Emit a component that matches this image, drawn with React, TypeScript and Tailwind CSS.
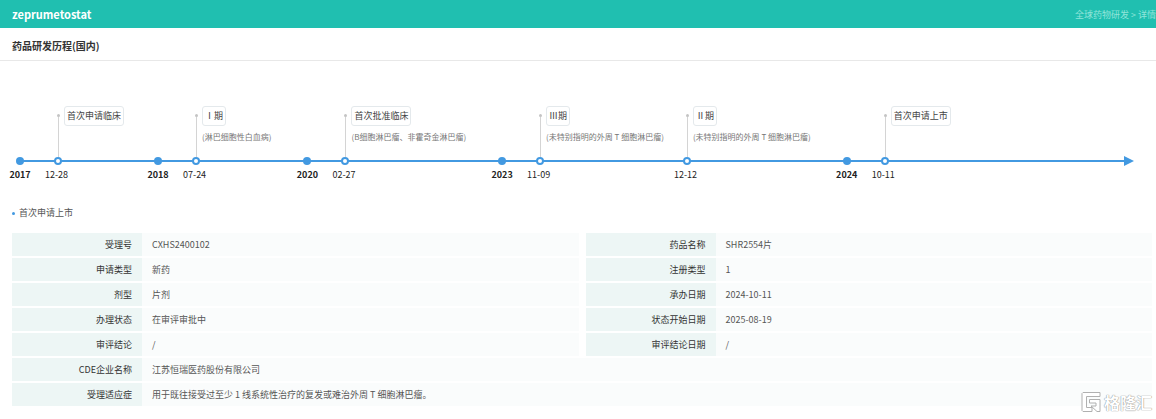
import React from "react"

interface YearItem {
  kind: "year"
  label: string
}

interface EventItem {
  kind: "event"
  date: string
  title: string
  note?: string
}

type TimelineItem = YearItem | EventItem

interface Field {
  label: string
  value: string
}

const timeline: TimelineItem[] = [
  { kind: "year", label: "2017" },
  { kind: "event", date: "12-28", title: "首次申请临床" },
  { kind: "year", label: "2018" },
  { kind: "event", date: "07-24", title: "Ⅰ期", note: "(淋巴细胞性白血病)" },
  { kind: "year", label: "2020" },
  { kind: "event", date: "02-27", title: "首次批准临床", note: "(B细胞淋巴瘤、非霍奇金淋巴瘤)" },
  { kind: "year", label: "2023" },
  { kind: "event", date: "11-09", title: "Ⅲ期", note: "(未特别指明的外周 T 细胞淋巴瘤)" },
  { kind: "event", date: "12-12", title: "Ⅱ期", note: "(未特别指明的外周 T 细胞淋巴瘤)" },
  { kind: "year", label: "2024" },
  { kind: "event", date: "10-11", title: "首次申请上市" },
]

// One or two fields per table row
const rows: Field[][] = [
  [{ label: "受理号", value: "CXHS2400102" }, { label: "药品名称", value: "SHR2554片" }],
  [{ label: "申请类型", value: "新药" }, { label: "注册类型", value: "1" }],
  [{ label: "剂型", value: "片剂" }, { label: "承办日期", value: "2024-10-11" }],
  [{ label: "办理状态", value: "在审评审批中" }, { label: "状态开始日期", value: "2025-08-19" }],
  [{ label: "审评结论", value: "/" }, { label: "审评结论日期", value: "/" }],
  [{ label: "CDE企业名称", value: "江苏恒瑞医药股份有限公司" }],
  [{ label: "受理适应症", value: "用于既往接受过至少 1 线系统性治疗的复发或难治外周 T 细胞淋巴瘤。" }],
]

const YearMarker: React.FC<{ item: YearItem }> = ({ item }) => (
  <li className="ml-[13px] mr-3 flex w-[26px] shrink-0 flex-col items-center justify-end first:ml-0">
    <span className="h-2 w-2 rounded-full bg-[#4299e1]" />
    <span className="mt-[2px] h-4 text-[9px] leading-4 font-bold text-[#222]">{item.label}</span>
  </li>
)

const EventMarker: React.FC<{ item: EventItem }> = ({ item }) => (
  <li className="mr-2 flex shrink-0 flex-col">
    <div className="flex h-[51px] pl-[12px]">
      <div className="mt-2 flex w-[3px] flex-col items-center">
        <span className="h-[3px] w-[3px] rounded-full bg-[#c4c4c4]" />
        <span className="w-px flex-1 bg-[#d4d4d4]" />
      </div>
      <div className="ml-1 flex flex-col items-start">
        <span className="h-5 rounded-[3px] border border-[#e4e9ec] px-[2px] text-[9px] leading-[18px] text-[#444]">
          {item.title}
        </span>
        {item.note && <span className="mt-[3px] pr-[2px] text-[8px] leading-4 text-[#777]">{item.note}</span>}
      </div>
    </div>
    <span className="ml-[9px] h-2 w-2 rounded-full border-2 border-[#4299e1] bg-white" />
    <time className="mt-[2px] h-4 text-[9px] leading-4 text-[#222]">{item.date}</time>
  </li>
)

const Watermark: React.FC = () => (
  <div className="absolute right-1 bottom-[6px] flex items-center gap-[3px]" aria-hidden="true">
    <svg width="20" height="22" viewBox="0 0 20 22" fill="#fff" stroke="#b0b0b0" strokeLinejoin="round">
      <path d="M2 1.5h17v4H5.5v11H11v4H2l-1-1v-17z" />
      <path d="M8.500 8.500H19v12h-3l-6-5.500h5v-3H8.500z" />
    </svg>
    <span className="text-[16px] leading-5 font-bold text-white [text-shadow:0_0_1px_#888,0_0_1px_#999]">格隆汇</span>
  </div>
)

const App: React.FC = () => {
  return (
    <div className="relative overflow-hidden bg-white pb-[11px] font-['Noto_Sans_CJK_SC',sans-serif] text-[9px] text-[#555]">
      <header className="flex h-7 items-center justify-between bg-[#20bfb0] pt-px pl-3">
        <h1 className="text-[11px] font-bold text-white">zeprumetostat</h1>
        <nav className="whitespace-nowrap text-[#90e5da]">
          <a href="#list">全球药物研发</a> &gt; <span>详情</span>
        </nav>
      </header>

      <h2 className="flex h-[33px] items-center border-b border-[#e8e8e8] px-3 pt-[3px] text-[10px] font-bold text-[#333]">
        药品研发历程(国内)
      </h2>

      {/* Timeline */}
      <section className="relative mx-3 mt-[45px]">
        <div className="absolute top-[50px] right-[10px] left-2 flex h-[10px] items-center">
          <span className="h-[2px] flex-1 bg-[#4299e1]" />
          <svg width="10" height="10" viewBox="0 0 10 10" fill="#4299e1">
            <path d="M0 0l10 5-10 5z" />
          </svg>
        </div>
        <ol className="relative -ml-[5px] flex whitespace-nowrap">
          {timeline.map((item, idx) =>
            item.kind === "year" ? <YearMarker key={idx} item={item} /> : <EventMarker key={idx} item={item} />
          )}
        </ol>
      </section>

      {/* Details */}
      <section className="mt-4 pr-1 pl-3">
        <h3 className="flex h-7 items-center gap-1">
          <span className="h-[3px] w-[3px] rounded-full bg-[#4299e1]" />
          首次申请上市
        </h3>
        <table className="mt-1 w-full table-fixed border-separate border-spacing-x-0 border-spacing-y-[2px]">
          <colgroup>
            <col className="w-[130px]" />
            <col />
            <col className="w-[137px]" />
            <col />
          </colgroup>
          <tbody>
            {rows.map((fields) => (
              <tr key={fields[0].label} className="h-[23px]">
                {fields.map((field, idx) => (
                  <React.Fragment key={field.label}>
                    <th
                      scope="row"
                      className={`bg-[#edf6f5] py-0 pr-[10px] text-right font-normal text-[#333] ${idx > 0 ? "border-l-[7px] border-white" : ""}`}
                    >
                      {field.label}
                    </th>
                    <td colSpan={fields.length === 1 ? 3 : 1} className="bg-[#fafcfc] py-0 pl-[10px]">
                      {field.value}
                    </td>
                  </React.Fragment>
                ))}
              </tr>
            ))}
          </tbody>
        </table>
      </section>

      <Watermark />
    </div>
  )
}

export default App
